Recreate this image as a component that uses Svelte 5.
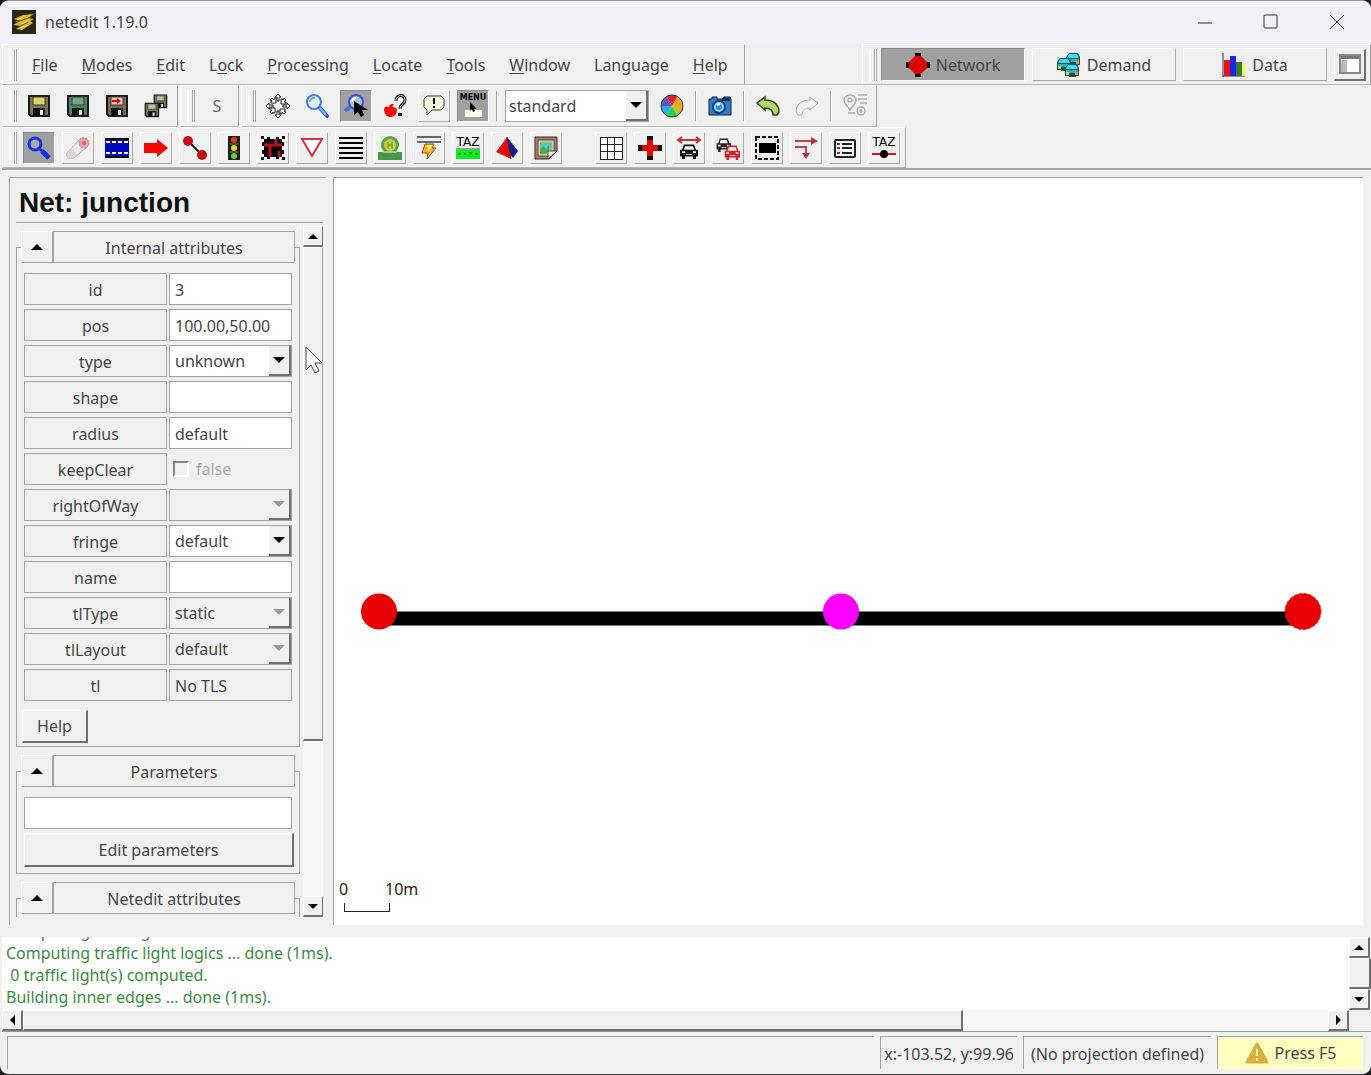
<script lang="ts">
  interface Attribute {
    name: string;
    kind: 'text' | 'select' | 'check';
    value: string;
    disabled?: boolean;
  }

  const menus = [
    ['', 'F', 'ile'],
    ['', 'M', 'odes'],
    ['', 'E', 'dit'],
    ['L', 'o', 'ck'],
    ['', 'P', 'rocessing'],
    ['', 'L', 'ocate'],
    ['', 'T', 'ools'],
    ['', 'W', 'indow'],
    ['Langua', 'g', 'e'],
    ['', 'H', 'elp'],
  ];

  const fileTools = ['save', 'saveGreen', 'saveRed', 'saveAll'];
  const viewTools = ['recenter', 'zoom', 'zoomCursor', 'locate', 'tooltip', 'menu'];
  const modeTools = [
    'inspect', 'delete', 'select', 'move', 'edge', 'tls', 'connection',
    'prohibition', 'crossing', 'additional', 'wire', 'taz', 'polygon', 'decal',
  ];
  const viewOptions = [
    'grid', 'junctionShape', 'spread', 'demand', 'selectEdges', 'connections', 'list', 'tazLink',
  ];
  const pressed = ['zoomCursor', 'menu', 'inspect'];
  const raised = ['tooltip'];

  let attributes: Attribute[] = $state([
    { name: 'id', kind: 'text', value: '3' },
    { name: 'pos', kind: 'text', value: '100.00,50.00' },
    { name: 'type', kind: 'select', value: 'unknown' },
    { name: 'shape', kind: 'text', value: '' },
    { name: 'radius', kind: 'text', value: 'default' },
    { name: 'keepClear', kind: 'check', value: 'false', disabled: true },
    { name: 'rightOfWay', kind: 'select', value: '', disabled: true },
    { name: 'fringe', kind: 'select', value: 'default' },
    { name: 'name', kind: 'text', value: '' },
    { name: 'tlType', kind: 'select', value: 'static', disabled: true },
    { name: 'tlLayout', kind: 'select', value: 'default', disabled: true },
    { name: 'tl', kind: 'text', value: 'No TLS', disabled: true },
  ]);

  let supermode = $state('Network');
  let parameters = $state('');

  const log = [
    'Computing turning directions ...',
    'Computing traffic light logics ... done (1ms).',
    ' 0 traffic light(s) computed.',
    'Building inner edges ... done (1ms).',
  ];
</script>

{#snippet floppy(body: string, label: string)}
  <path d="M2 2h20v20h-18l-2-2z" fill={body} stroke="#1c1a14" stroke-width="2" />
  <path d="M6 3h12v8h-12z" fill={label} stroke="#3a382c" />
  <path d="M6 14h12v8h-12z" fill="#111" />
  <path d="M13 16h3v5h-3z" fill="#eee" />
{/snippet}

{#snippet car(color: string)}
  <path d="M6 3h10l2 6h2v8h-2v3h-3v-3h-8v3h-3v-3h-2v-8h2z" fill={color} />
  <path d="M7 5h8l1 4h-10z" fill="#f4f4f4" />
  <path d="M4 11h3v2h-3zM15 11h3v2h-3zM8 14h6v1h-6z" fill="#f4f4f4" />
{/snippet}

{#snippet icon(name: string)}
  <svg class="icon" viewBox="0 0 24 24" aria-hidden="true">
    {#if name === 'save'}
      {@render floppy('#7a745e', '#ddd26c')}
    {:else if name === 'saveGreen'}
      {@render floppy('#4a8562', '#6fa783')}
    {:else if name === 'saveRed'}
      {@render floppy('#7a6a5e', '#dccbbd')}
      <path d="M7 6h5v-2l4 3-4 3v-2h-5z" fill="#e00" />
    {:else if name === 'saveAll'}
      <g transform="translate(9 0) scale(.62)">{@render floppy('#77715d', '#b9c0a0')}</g>
      <g transform="translate(0 8) scale(.66)">{@render floppy('#77715d', '#b9c0a0')}</g>
    {:else if name === 'recenter'}
      {#each [0, 90, 180, 270] as angle}
        <g transform="rotate({angle} 12 12)" fill="#fff" stroke="#222">
          <path d="M12 0l3 3h-2v4h-2v-4h-2z" />
          <path d="M4 6l2-2 2 2v-2h2v5h-5v-2h1z" />
        </g>
      {/each}
    {:else if name === 'zoom'}
      <path d="M14 13l8 9" stroke="#2855c8" stroke-width="4" stroke-linecap="round" />
      <path d="M14 13l7 8" stroke="#79b5f2" stroke-width="2" />
      <circle cx="9" cy="8" r="7" fill="#dff3fb" stroke="#4a78e0" stroke-width="2" />
      <path d="M5 8a4 4 0 0 1 5-4" fill="none" stroke="#7ba6b5" stroke-width="2" />
    {:else if name === 'zoomCursor'}
      <path d="M1 17l6-5" stroke="#3f74dc" stroke-width="4" />
      <circle cx="12" cy="8" r="7" fill="#a9c4d8" stroke="#2e55d8" stroke-width="2" />
      <path d="M8 8a4 4 0 0 1 4-4" fill="none" stroke="#fff" stroke-width="2" />
      <path d="M10 7v14l4-3 3 5 3-2-2-5h6z" fill="#000" />
    {:else if name === 'locate'}
      <path d="M13 7c0-7 9-7 9-1 0 4-5 4-5 9" fill="none" stroke="#000" stroke-width="3" />
      <path d="M13 7c0-7 9-7 9-1 0 4-5 4-5 9" fill="none" stroke="#fff" />
      <path d="M15 19h4v3h-4z" fill="#000" />
      <path d="M1 16c0-4 3-4 5-3 1-4 4-3 5-3l-2 3c5 0 6 3 4 7-2 4-9 4-11 0z" fill="#f00a0a" />
    {:else if name === 'tooltip'}
      <path d="M5 2h14l3 3v8l-3 3h-9l-5 5v-5l-3-3v-8z" fill="#ffffe6" stroke="#333" />
      <path d="M12 4v6M12 12v2" stroke="#111" stroke-width="2" />
    {:else if name === 'menu'}
      <text x="12" y="6" class="tiny" text-anchor="middle">MENU</text>
      <path d="M4 16h17v7h-17z" fill="#ffffe6" />
      <path d="M9 8v9l2-2 1 3 2-1-1-2h3z" />
    {:else if name === 'wheel'}
      <path d="M12 12L6.500 2.500A11 11 0 0 1 17.500 2.500z" fill="#dc2030" />
      <path d="M12 12L17.500 2.500A11 11 0 0 1 23 12z" fill="#f1a51e" />
      <path d="M12 12L23 12A11 11 0 0 1 17.500 21.500z" fill="#d9b62d" />
      <path d="M12 12L17.500 21.500A11 11 0 0 1 6.500 21.500z" fill="#24d447" />
      <path d="M12 12L6.500 21.500A11 11 0 0 1 1 12z" fill="#2ab0e0" />
      <path d="M12 12L1 12A11 11 0 0 1 6.500 2.500z" fill="#6257b8" />
      <circle cx="12" cy="12" r="11" fill="none" stroke="#333" />
    {:else if name === 'camera'}
      <path d="M1 5h3v-2h5v2h6l1-2h6l1 2v16h-22z" fill="#2f7fc8" stroke="#123" />
      <path d="M14 4h8v3h-8z" fill="#0c2c5a" />
      <circle cx="11" cy="13" r="6" fill="#8fdcff" stroke="#0d3f7d" stroke-width="2" />
      <circle cx="11" cy="13" r="3" fill="#2d86c9" />
      <path d="M9 11l3-1" stroke="#fff" stroke-width="2" />
    {:else if name === 'undo'}
      <path d="M1 9l8-6v3c9 0 14 5 14 12l-2 3h-4c0-5-3-7-8-7v2z" fill="#b5d56a" stroke="#31451c" stroke-width="1.500" />
    {:else if name === 'redo'}
      <path d="M23 9l-8-6v3c-9 0-14 5-14 12l2 3h4c0-5 3-7 8-7v2z" fill="#f4f4f4" stroke="#aaa" />
    {:else if name === 'route'}
      <g fill="none" stroke="#aaa" stroke-width="1.500">
        <path d="M7 16c-3-5-6-6-6-10a6 5 0 0 1 12 0c0 4-3 5-6 10z" />
        <circle cx="7" cy="6" r="2" />
        <path d="M15 1h9M15 5h9M17 9h7M5 19h7" />
        <circle cx="18" cy="17" r="4" />
        <circle cx="18" cy="17" r="1" />
      </g>
    {:else if name === 'inspect'}
      <circle cx="8" cy="8" r="6" fill="#aaa" stroke="#1431e8" stroke-width="3" />
      <path d="M12 12l3 3" stroke="#1431e8" stroke-width="3" />
      <path d="M15 15l7 7" stroke="#1431e8" stroke-width="5" />
    {:else if name === 'delete'}
      <path d="M1 17l13-14c3-4 10 3 8 7l-14 12c-4 2-9-1-7-5z" fill="#f1e9e9" stroke="#b5a9a9" />
      <path d="M1 17l5-5 5 7-4 3c-4 2-8-1-6-5z" fill="#ddd3d3" />
      <circle cx="18" cy="7" r="5" fill="#e7a3aa" stroke="#d47580" stroke-dasharray="2 1" />
      <circle cx="18" cy="7" r="2" fill="#cf6370" />
    {:else if name === 'select'}
      <path d="M0 2h24v20h-24z" fill="#0008b8" />
      <path d="M1 6h23M1 17h23" stroke="#fff" stroke-width="2" stroke-dasharray="4 2" />
      <path d="M0 3h24M0 21h24" stroke="#000" stroke-width="2" />
    {:else if name === 'move'}
      <path d="M0 7h13v-4l11 9-11 9v-4h-13z" fill="#fb0303" />
    {:else if name === 'edge'}
      <path d="M5 5l14 14" stroke="#111" stroke-width="2" />
      <circle cx="5" cy="5" r="5" fill="#c40a16" />
      <circle cx="19" cy="19" r="5" fill="#c40a16" />
    {:else if name === 'tls'}
      <path d="M6 0h12v24h-12z" fill="#1c1c10" />
      <circle cx="12" cy="4" r="3" fill="#d93a26" />
      <circle cx="12" cy="12" r="3" fill="#e8d32c" />
      <circle cx="12" cy="20" r="3" fill="#51d33b" />
      <path d="M7 8h10M7 16h10" stroke="#77752f" />
    {:else if name === 'connection'}
      <path d="M3 3h18v18h-18z" />
      <path d="M0 0h3v3h-3zM21 0h3v3h-3zM0 21h3v3h-3zM21 21h3v3h-3zM6 1h3v2h-3zM15 1h3v2h-3zM6 21h3v2h-3zM15 21h3v2h-3zM1 6h2v4h-2zM21 6h2v4h-2zM1 14h2v4h-2zM21 14h2v4h-2z" />
      <path d="M3 9h14M9 9v12M15 3v6h6M18 21v-6" fill="none" stroke="#b5121a" stroke-width="3" />
    {:else if name === 'prohibition'}
      <path d="M2 3h20l-10 17z" fill="#fff" stroke="#d7303f" stroke-width="2" />
    {:else if name === 'crossing'}
      <path d="M0 2h24M0 7h24M0 12h24M0 17h24M0 22h24" stroke="#000" stroke-width="2" />
    {:else if name === 'additional'}
      <path d="M0 16h24v8h-24z" fill="#489748" />
      <circle cx="12" cy="9" r="9" fill="#57a24c" />
      <circle cx="12" cy="9" r="6" fill="#c9d14b" />
      <path d="M10 6v7M14 6v7M10 9h4" stroke="#648225" />
      <path d="M5 17c2-3 12-3 14 0z" fill="#a5d17b" />
    {:else if name === 'wire'}
      <path d="M0 1h24M0 6h24" stroke="#666" stroke-width="2" />
      <path d="M8 8h9l-2 4h4l-9 11 1-6h-6z" fill="#f5ad22" stroke="#94501b" />
      <path d="M10 10h4l-3 5" fill="none" stroke="#fff17c" stroke-width="2" />
    {:else if name === 'taz'}
      <text x="12" y="10" class="taz" text-anchor="middle">TAZ</text>
      <path d="M0 14h24v9h-24z" fill="#13ea20" />
      <path d="M0 13h24M2 18h3M8 18h2M13 17h3M19 18h3" stroke="#116c18" />
    {:else if name === 'polygon'}
      <path d="M12 1l11 14-5 7-5-6z" fill="#171c8e" />
      <path d="M12 1l-11 15 15 7z" fill="#dc1010" />
      <path d="M12 1l4 22" stroke="#700d18" />
    {:else if name === 'decal'}
      <path d="M1 1h22v14l-8 8h-14z" fill="#aa7773" stroke="#382e2e" />
      <path d="M4 4h16v10l-6 6h-10z" fill="#e6d46a" stroke="#555" />
      <path d="M6 6h12v8h-6v4h-6z" fill="#5bc1c6" />
      <path d="M6 14l3-4 3 3 3-4v5l-3 4h-6z" fill="#4dab4b" />
      <path d="M14 23v-8h9z" fill="#f7f2df" stroke="#444" />
    {:else if name === 'grid'}
      <path d="M1 1h22v22h-22zM8 1v22M15 1v22M1 8h22M1 15h22" fill="#fff" stroke="#222" shape-rendering="crispEdges" />
    {:else if name === 'junctionShape'}
      <path d="M9 0h6v5h-6zM9 19h6v5h-6zM0 9h5v6h-5zM19 9h5v6h-5z" fill="#111" />
      <path d="M9 4h6v5h5v6h-5v5h-6v-5h-5v-6h5z" fill="#d90c0c" />
    {:else if name === 'spread'}
      <path d="M2 4h20M5 1l-4 3 4 3M19 1l4 3-4 3" fill="none" stroke="#c33038" stroke-width="2" />
      <g transform="translate(1 6) scale(1 .85)">{@render car('#111')}</g>
    {:else if name === 'demand'}
      <g transform="translate(-1 0) scale(.8)">{@render car('#222')}</g>
      <g transform="translate(7 7) scale(.85)">{@render car('#ce2530')}</g>
    {:else if name === 'selectEdges'}
      <path d="M1 1h22v22h-22z" fill="none" stroke="#111" stroke-width="2" stroke-dasharray="4 2" />
      <path d="M4 7h17v10h-17z" />
    {:else if name === 'connections'}
      <path d="M1 5h19M1 11h11v8" fill="none" stroke="#b54455" stroke-width="2" />
      <path d="M17 1l7 4-7 4zM8 17h8l-4 6z" fill="#b8303f" />
    {:else if name === 'list'}
      <rect x="2" y="4" width="20" height="17" rx="1" fill="#fff" stroke="#222" stroke-width="2" />
      <path d="M9 8h10M9 12h10M9 17h10" stroke="#222" stroke-width="2" />
      <path d="M4 8h3M4 12h3M4 17h3" stroke="#8d2f39" stroke-width="2" />
    {:else if name === 'tazLink'}
      <text x="12" y="10" class="taz" text-anchor="middle">TAZ</text>
      <path d="M0 18h24" stroke="#d31225" stroke-width="2" />
      <circle cx="12" cy="18" r="4" />
    {:else if name === 'Network'}
      <path d="M9 0h6v24h-6zM0 9h24v6h-24z" />
      <path d="M9 3h6l6 6v6l-6 6h-6l-6-6v-6z" fill="#df0000" />
    {:else if name === 'Demand'}
      {#each [[9, 0], [0, 5], [8, 11]] as [x, y]}
        <g transform="translate({x} {y})">
          <path d="M3 0h9l2 4v8h-3v1h-7v-1h-4v-8z" fill="#174d55" />
          <path d="M3 1h8l2 4h-12z" fill="#39dfee" />
          <path d="M1 6h12v3h-12z" fill="#33aeb5" />
          <path d="M1 8h3v3h-3z" fill="#d8dc32" />
          <path d="M10 8h3v3h-3z" fill="#ed972d" />
        </g>
      {/each}
    {:else if name === 'Data'}
      <path d="M1 0v24M1 23h22" stroke="#333" />
      <path d="M2 7h6v16h-6z" fill="#ed1010" />
      <path d="M8 3h6v20h-6z" fill="#1b25ee" />
      <path d="M14 9h6v14h-6z" fill="#3a7d29" />
      <path d="M20 11h4v12h-4z" fill="#ecf287" />
    {:else if name === 'window'}
      <path d="M2 3h20v18h-20z" fill="#fff" stroke="#888" stroke-width="2" />
      <path d="M3 4h18v3h-18z" fill="#777" />
      <path d="M3 8h6v12h-6z" fill="#bbb" />
    {:else if name === 'warning'}
      <path d="M12 3l10 18h-20z" fill="#dcae3c" stroke="#dcae3c" stroke-width="3" stroke-linejoin="round" />
      <path d="M12 8v7M12 17v3" stroke="#fff8d0" stroke-width="2" />
    {:else if name === 'logo'}
      <path d="M0 0h24v24h-24z" fill="#292718" />
      <path d="M2 9l9-4 11-1-6 4 6 1-4 2 3 2-11 7-6-1 5-3-8-1 7-4z" fill="#d5b52d" />
      <path d="M5 10l6-3M9 14l8-4M8 18l8-3" stroke="#f5e36f" />
      <path d="M3 12l8-2 8-3M7 17l9-5" fill="none" stroke="#6a5716" />
    {/if}
  </svg>
{/snippet}

{#snippet tool(name: string, flat: boolean)}
  <button
    class="tool"
    class:flat={flat && !raised.includes(name)}
    class:pressed={pressed.includes(name)}
    aria-label={name}
  >
    {@render icon(name)}
  </button>
{/snippet}

{#snippet arrow(dir: string)}
  <button class="scroll-button" aria-label="Scroll {dir}"><span class="arrow {dir}"></span></button>
{/snippet}

{#snippet heading(text: string)}
  <legend>
    <button class="collapse" aria-label="Collapse {text}"><span class="arrow up"></span></button>
    <span class="heading">{text}</span>
  </legend>
{/snippet}

<div class="window">
  <header class="titlebar">
    {@render icon('logo')}
    <span class="title">netedit 1.19.0</span>
    <div class="caption">
      <button aria-label="Minimize"><svg viewBox="0 0 16 16"><path d="M1 9h14" /></svg></button>
      <button aria-label="Maximize"><svg viewBox="0 0 16 16"><rect x="1" y="1" width="13" height="13" rx="1" /></svg></button>
      <button aria-label="Close"><svg viewBox="0 0 16 16"><path d="M1 1l14 14M15 1l-14 14" /></svg></button>
    </div>
  </header>

  <div class="bar menu-row">
    <nav class="dock menubar">
      <span class="grip"></span>
      {#each menus as [before, key, after]}
        <button class="menu-item">{before}<u>{key}</u>{after}</button>
      {/each}
    </nav>
    <div class="dock supermodes">
      <span class="grip"></span>
      {#each ['Network', 'Demand', 'Data'] as mode}
        <button class="supermode" class:pressed={supermode === mode} onclick={() => (supermode = mode)}>
          {@render icon(mode)}{mode}
        </button>
      {/each}
      <button class="tool strong" aria-label="Toggle view">{@render icon('window')}</button>
    </div>
  </div>

  <div class="bar">
    <div class="dock">
      <span class="grip"></span>
      {#each fileTools as name}{@render tool(name, true)}{/each}
    </div>
    <div class="dock">
      <span class="grip"></span>
      <button class="tool flat time">S</button>
    </div>
    <div class="dock">
      <span class="grip"></span>
      {#each viewTools as name}{@render tool(name, true)}{/each}
      <span class="separator"></span>
      <div class="combo scheme">
        <select aria-label="Coloring scheme"><option>standard</option></select>
        <span class="drop"><span class="arrow down"></span></span>
      </div>
      {@render tool('wheel', true)}
      <span class="separator"></span>
      {@render tool('camera', true)}
      <span class="separator"></span>
      {@render tool('undo', true)}
      {@render tool('redo', true)}
      <span class="separator"></span>
      {@render tool('route', true)}
    </div>
  </div>

  <div class="bar modes">
    <div class="dock">
      <span class="grip"></span>
      {#each modeTools as name}{@render tool(name, false)}{/each}
      <span class="spacer"></span>
      {#each viewOptions as name}{@render tool(name, false)}{/each}
    </div>
  </div>

  <main>
    <aside>
      <h1>Net: junction</h1>
      <div class="scroll-area">
        <div class="groups">
          <fieldset>
            {@render heading('Internal attributes')}
            <div class="attributes">
              {#each attributes as attr (attr.name)}
                <label for="attr-{attr.name}">{attr.name}</label>
                {#if attr.kind === 'select'}
                  <div class="combo" class:disabled={attr.disabled}>
                    <select id="attr-{attr.name}" disabled={attr.disabled}><option>{attr.value}</option></select>
                    <span class="drop"><span class="arrow down"></span></span>
                  </div>
                {:else if attr.kind === 'check'}
                  <div class="check">
                    <input id="attr-{attr.name}" type="checkbox" disabled={attr.disabled} />
                    <span>{attr.value}</span>
                  </div>
                {:else}
                  <input id="attr-{attr.name}" type="text" disabled={attr.disabled} bind:value={attr.value} />
                {/if}
              {/each}
            </div>
            <button class="push help">Help</button>
          </fieldset>
          <fieldset>
            {@render heading('Parameters')}
            <input class="parameters" type="text" aria-label="Parameters" bind:value={parameters} />
            <button class="push edit">Edit parameters</button>
          </fieldset>
          <fieldset class="cut">
            {@render heading('Netedit attributes')}
          </fieldset>
        </div>
        <div class="scrollbar vertical">
          {@render arrow('up')}
          <span class="thumb"></span>
          <span class="track"></span>
          {@render arrow('down')}
          <svg class="pointer" viewBox="0 0 18 28"><path d="M1 1v23l5-5 4 8 4-2-4-8h7z" /></svg>
        </div>
      </div>
    </aside>

    <section class="view">
      <svg viewBox="0 0 1029 746" preserveAspectRatio="xMidYMid meet" role="img" aria-label="Road network">
        <path d="M45 440h924" stroke="#000" stroke-width="14" />
        <circle cx="45" cy="433" r="18" fill="#e80000" />
        <circle cx="507" cy="433" r="18" fill="#f0f" />
        <circle cx="969" cy="433" r="18" fill="#e80000" stroke="#d22" stroke-dasharray="3 2" />
        <path d="M10 724v9h45v-9" fill="none" stroke="#222" shape-rendering="crispEdges" />
        <text x="5" y="716">0</text>
        <text x="51" y="716">10m</text>
      </svg>
    </section>
  </main>

  <section class="messages">
    <div class="log">
      {#each log as line}<p>{line}</p>{/each}
    </div>
    <div class="scrollbar vertical">
      {@render arrow('up')}
      <span class="thumb"></span>
      {@render arrow('down')}
    </div>
    <div class="scrollbar horizontal">
      {@render arrow('left')}
      <span class="thumb"></span>
      <span class="track"></span>
      {@render arrow('right')}
    </div>
  </section>

  <footer>
    <span class="status message"></span>
    <span class="status">x:-103.52, y:99.96</span>
    <span class="status projection">(No projection defined)</span>
    <button class="status recompute">{@render icon('warning')}Press F5</button>
  </footer>
</div>

<style>
  :global(body) {
    margin: 0;
    background: #1d1a20;
  }
  .window {
    --face: #f0f0f0;
    --shade: #a3a3a3;
    --dark: #707070;
    box-sizing: border-box;
    display: flex;
    flex-direction: column;
    min-height: 100vh;
    padding: 0 0 5px 2px;
    border-top: 1px solid #99939e;
    border-bottom: 1px solid #333;
    border-radius: 9px;
    background: var(--face);
    color: #444;
    font: 16px/22px "Noto Sans", "Open Sans", sans-serif;
    font-variant-ligatures: none;
    overflow: hidden;
  }
  .window * {
    box-sizing: border-box;
  }
  button,
  input,
  select {
    margin: 0;
    padding: 0;
    border: 0;
    border-radius: 0;
    background: var(--face);
    color: inherit;
    font: inherit;
  }
  .icon {
    flex: none;
    width: 24px;
    height: 24px;
    overflow: visible;
  }
  .tiny {
    font: bold 8px "DejaVu Sans", sans-serif;
  }
  .taz {
    font: 12px "DejaVu Sans", sans-serif;
  }

  .titlebar {
    display: flex;
    align-items: center;
    height: 43px;
    margin-left: -2px;
    padding: 0 9px 1px 12px;
    background: #f4f0f8;
  }
  .title {
    margin-left: 9px;
  }
  .caption {
    display: flex;
    gap: 16px;
    margin-left: auto;
  }
  .caption button {
    display: flex;
    align-items: center;
    justify-content: center;
    width: 50px;
    height: 32px;
    background: none;
  }
  .caption svg {
    width: 16px;
    height: 16px;
    fill: none;
    stroke: #333;
  }

  .bar {
    display: flex;
    gap: 2px;
    height: 42px;
    padding: 0 4px 0 0;
  }
  .menu-row {
    height: 41px;
    justify-content: space-between;
    padding-right: 0;
    border-bottom: 1px solid #b5b5b5;
  }
  .modes {
    height: 43px;
    border-bottom: 2px solid var(--shade);
  }
  .dock {
    display: flex;
    align-items: center;
    gap: 7px;
    padding: 0 5px 0 6px;
    border: 1px solid;
    border-color: #fff var(--shade) #b5b5b5 #fff;
  }
  .menubar,
  .supermodes {
    border-bottom: 0;
  }
  .grip {
    flex: none;
    width: 8px;
    height: 32px;
    margin-right: -1px;
    border: solid var(--shade);
    border-width: 0 1px;
    background: linear-gradient(90deg, #fff 1px, var(--face) 1px 4px, var(--shade) 4px 5px, #fff 5px);
    border-left-color: #fff;
  }
  .menubar {
    gap: 0;
    padding-right: 4px;
  }
  .menubar .grip {
    margin-right: 3px;
  }
  .menu-item {
    padding: 0 12px;
  }
  u {
    text-underline-offset: 2px;
  }
  .tool {
    display: flex;
    flex: none;
    align-items: center;
    justify-content: center;
    width: 32px;
    height: 32px;
    border: 1px solid;
    border-color: #fff #aaa #aaa #fff;
  }
  .flat {
    border-color: transparent;
  }
  .strong {
    border-width: 1px 2px 2px 1px;
    border-color: #fff var(--dark) var(--dark) #fff;
  }
  .tool.pressed,
  .supermode.pressed {
    background: #a0a0a0;
    border-color: #8a8a8a #fff #fff #8a8a8a;
  }
  .time {
    color: #666;
  }
  .supermodes {
    padding-right: 4px;
  }
  .supermodes .grip {
    margin-right: -3px;
  }
  .supermode {
    display: flex;
    align-items: center;
    justify-content: center;
    gap: 6px;
    width: 144px;
    height: 33px;
    border: 1px solid;
    border-color: #fff #aaa #aaa #fff;
  }
  .separator {
    flex: none;
    width: 2px;
    height: 30px;
    border-left: 1px solid var(--shade);
    border-right: 1px solid #fff;
  }
  .spacer {
    width: 19px;
  }

  .arrow {
    width: 0;
    height: 0;
    border: 5px solid transparent;
  }
  .arrow.up {
    border-width: 0 6px 6px;
    border-bottom-color: #000;
  }
  .arrow.down {
    border-width: 6px 6px 0;
    border-top-color: #000;
  }
  .arrow.left {
    border-width: 5px 5px 5px 0;
    border-right-color: #000;
  }
  .arrow.right {
    border-width: 5px 0 5px 5px;
    border-left-color: #000;
  }
  .combo {
    position: relative;
    height: 32px;
    border: 1px solid var(--shade);
    background: #fff;
  }
  .combo select {
    width: 100%;
    height: 100%;
    padding-left: 5px;
    appearance: none;
    background: none;
    color: inherit;
    opacity: 1;
  }
  .combo .drop {
    position: absolute;
    top: 0;
    right: 0;
    bottom: 0;
    display: flex;
    align-items: center;
    justify-content: center;
    width: 22px;
    border: solid var(--dark);
    border-width: 0 2px 2px 0;
    background: var(--face);
    pointer-events: none;
  }
  .combo.disabled {
    background: var(--face);
  }
  .disabled .arrow.down {
    border-top-color: #999;
  }
  .scheme {
    width: 144px;
  }
  .scheme select {
    padding-left: 3px;
  }

  main {
    display: flex;
    flex: 1;
    gap: 7px;
    padding: 6px 8px 6px 7px;
    border-top: 1px solid #fff;
  }
  aside {
    flex: none;
    width: 317px;
    padding: 0 3px 0 6px;
    border: solid var(--shade);
    border-width: 1px 0 0 1px;
  }
  h1 {
    margin: 0;
    padding: 8px 3px 3px;
    border-bottom: 1px solid var(--shade);
    color: #111;
    font: bold 28px/33px "Liberation Sans", sans-serif;
  }
  .scroll-area {
    display: flex;
    justify-content: space-between;
    height: 694px;
    padding-top: 3px;
  }
  .groups {
    flex: none;
    width: 284px;
    padding-top: 5px;
    overflow: hidden;
  }
  fieldset {
    min-width: 0;
    margin: 0 0 8px;
    padding: 10px 7px 6px;
    border: 1px solid var(--shade);
  }
  fieldset.cut {
    padding-bottom: 20px;
  }
  legend {
    display: flex;
    width: 274px;
    height: 32px;
    margin-left: -3px;
    padding: 0;
  }
  .collapse {
    display: flex;
    align-items: center;
    justify-content: center;
    width: 32px;
    border: 1px solid;
    border-color: #fff var(--shade) var(--shade) #fff;
  }
  .heading {
    flex: 1;
    border: 1px solid var(--shade);
    line-height: 32px;
    text-align: center;
  }
  .attributes {
    display: grid;
    grid-template-columns: 143px 123px;
    gap: 4px 2px;
  }
  .attributes label {
    height: 32px;
    border: 1px solid var(--shade);
    line-height: 32px;
    text-align: center;
  }
  input[type="text"] {
    width: 100%;
    height: 32px;
    padding: 1px 5px 0;
    border: 1px solid var(--shade);
    background: #fff;
  }
  input[type="text"]:disabled {
    background: var(--face);
  }
  .check {
    display: flex;
    align-items: center;
    gap: 7px;
    padding-left: 4px;
    color: #aaa;
  }
  .check input {
    width: 16px;
    height: 16px;
    appearance: none;
    border: 2px solid;
    border-color: #888 #fff #fff #888;
  }
  .push {
    border: solid;
    border-width: 1px 2px 2px 1px;
    border-color: #fff var(--dark) var(--dark) #fff;
  }
  .help {
    display: block;
    width: 66px;
    height: 33px;
    margin: 9px 0 -3px -2px;
  }
  .edit {
    display: block;
    width: 270px;
    height: 34px;
    margin-top: 4px;
  }
  fieldset .parameters {
    display: block;
    width: 268px;
  }

  .scrollbar {
    display: flex;
    background: #f7f7f7;
  }
  .vertical {
    position: relative;
    flex-direction: column;
    width: 20px;
  }
  .scroll-button {
    display: flex;
    flex: none;
    align-items: center;
    justify-content: center;
    width: 21px;
    height: 21px;
    border: solid;
    border-width: 1px 2px 2px 1px;
    border-color: #fff var(--dark) var(--dark) #fff;
  }
  .scroll-button .up {
    border-width: 0 5px 5px;
  }
  .scroll-button .down {
    border-width: 5px 5px 0;
  }
  .thumb {
    border: solid;
    border-width: 1px 2px 2px 1px;
    border-color: #fff var(--dark) var(--dark) #fff;
    background: var(--face);
  }
  aside .vertical > .thumb {
    flex: 494;
    border-right: 1px solid var(--shade);
  }
  aside .vertical > .track {
    flex: 156;
  }
  aside .scroll-button {
    width: 20px;
    border-right-width: 1px;
  }
  .pointer {
    position: absolute;
    top: 120px;
    left: 2px;
    width: 18px;
    height: 28px;
    fill: #fff;
    stroke: #444;
  }
  .view {
    flex: 1;
    border: solid var(--shade);
    border-width: 1px 0 0 1px;
    background: #fff;
  }
  .view svg {
    display: block;
    width: 100%;
    height: 100%;
  }
  .view text {
    fill: #222;
    font: 16px "Noto Sans", sans-serif;
  }

  .messages {
    display: grid;
    grid-template-columns: 1fr 22px;
    grid-template-rows: 73px 21px;
    margin-top: 6px;
    border-bottom: 1px solid #999;
  }
  .log {
    display: flex;
    flex-direction: column;
    justify-content: flex-end;
    padding: 0 4px 2px;
    background: #fff;
    color: #3d8a45;
    white-space: pre;
    overflow: hidden;
  }
  .log p {
    margin: 0;
  }
  .messages .vertical {
    width: 22px;
  }
  .messages .vertical .thumb {
    flex: 1;
  }
  .horizontal > .thumb {
    flex: 939;
  }
  .horizontal > .track {
    flex: 366;
  }

  footer {
    display: flex;
    gap: 6px;
    padding: 4px 8px 0 5px;
  }
  .status {
    height: 33px;
    padding: 0 3px;
    border: solid var(--shade);
    border-width: 1px 0 0 1px;
    line-height: 34px;
  }
  .message {
    flex: 1;
  }
  .projection {
    width: 188px;
    text-align: center;
  }
  .recompute {
    display: flex;
    align-items: center;
    justify-content: center;
    gap: 6px;
    width: 146px;
    background: #ffffc0;
  }
</style>
